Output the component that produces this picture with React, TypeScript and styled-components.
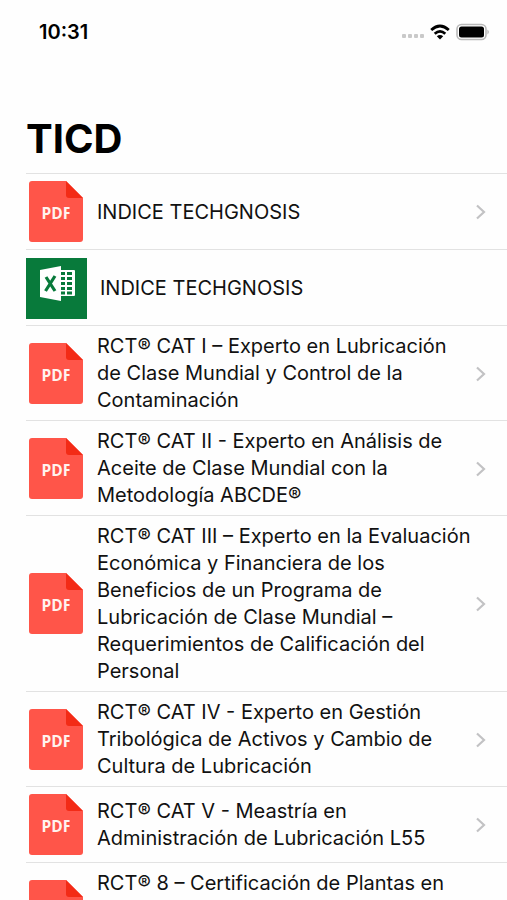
import React from 'react';
import styled, { createGlobalStyle } from 'styled-components';

const GlobalStyle = createGlobalStyle`
  * { box-sizing: border-box; }
  body {
    margin: 0;
    background: #fefefe;
    color: #111;
    font-family: Inter, "Liberation Sans", sans-serif;
  }
`;

const Screen = styled.div`
  height: 100vh;
  overflow: hidden;
  display: flex;
  flex-direction: column;
`;

const StatusBar = styled.header`
  flex: none;
  display: flex;
  align-items: center;
  justify-content: space-between;
  height: 64px;
  padding: 0 17px 0 39px;
`;

const Clock = styled.time`
  font-size: 20px;
  line-height: 24px;
  font-weight: 600;
  color: #000;
`;

const StatusIcons = styled.div`
  display: flex;
  align-items: center;
  gap: 6px;
`;

const Title = styled.h1`
  flex: none;
  margin: 0;
  padding: 50px 26px 10px;
  font-size: 40px;
  line-height: 49px;
  font-weight: 700;
  color: #000;
`;

const List = styled.ul`
  list-style: none;
  margin: 0 0 0 26px;
  padding: 0;
  border-top: 1px solid #e2e2e2;
`;

const Item = styled.li`
  border-bottom: 1px solid #e2e2e2;
`;

const RowLink = styled.a<{ $wide: boolean }>`
  display: flex;
  align-items: center;
  min-height: 75px;
  padding: 7px 20px 6px ${(p) => (p.$wide ? 0 : 3)}px;
  color: inherit;
  text-decoration: none;

  svg { flex: none; display: block; }
`;

const Label = styled.span<{ $lines: number }>`
  flex: 1;
  min-width: 0;
  min-height: ${(p) => p.$lines * 27}px;
  margin-left: 13px;
  font-size: 20px;
  line-height: 27px;
`;

function PdfIcon() {
  return (
    <svg width="55" height="62" viewBox="0 0 55 62" aria-hidden="true">
      <path d="M3 0H37L54 17V58Q54 61 51 61H3Q0 61 0 58V3Q0 0 3 0Z" fill="#ff5549" />
      <path d="M37 0L54 17H40Q37 17 37 14Z" fill="#f32b16" />
      <svg x="8" y="20" width="32.500" height="26" overflow="hidden">
        <text x="4.500" y="18" fontFamily="Open Sans, sans-serif" fontWeight="700" fontSize="15.500" fill="#fff3ee">PDF</text>
      </svg>
    </svg>
  );
}

function ExcelIcon() {
  return (
    <svg width="61" height="61" viewBox="0 0 61 61" aria-hidden="true">
      <rect width="61" height="61" fill="#087a3b" />
      <path d="M34 12H48Q49 12 49 13V37Q49 38 48 38H34Z" fill="#fff" />
      <path d="M35 15.5H39M41 15.5H46M35 20.5H39M41 20.5H46M35 25.5H39M41 25.5H46M35 30.5H39M41 30.5H46M35 35H39M41 35H46" stroke="#087a3b" strokeWidth="3" />
      <path d="M14 12L35 8V43L14 39Z" fill="#fff" />
      <path d="M20 19L29 33M29 18L19.500 33" stroke="#087a3b" strokeWidth="3.200" />
    </svg>
  );
}

function Chevron() {
  return (
    <svg width="12" height="18" viewBox="0 0 12 18" fill="none" aria-hidden="true">
      <path d="M2 2.500L9 9L2 15.500" stroke="#c2c2c4" strokeWidth="2.200" />
    </svg>
  );
}

function SignalIcon() {
  return (
    <svg width="22" height="20" viewBox="0 0 22 20" fill="#c9c9c9" aria-hidden="true">
      <rect x="0" y="12" width="4" height="4" rx="1" />
      <rect x="6" y="12" width="4" height="4" rx="1" />
      <rect x="12" y="12" width="4" height="4" rx="1" />
      <rect x="18" y="12" width="4" height="4" rx="1" />
    </svg>
  );
}

function WifiIcon() {
  return (
    <svg width="20" height="16" viewBox="0 0 20 16" fill="none" stroke="#000" strokeWidth="2.800" aria-hidden="true">
      <path d="M1.200 6Q10 -2 18.800 6" />
      <path d="M4.700 9.700Q10 5 15.300 9.700" />
      <path d="M10 15.500L6.800 12.300Q10 9.500 13.200 12.300Z" fill="#000" stroke="none" />
    </svg>
  );
}

function BatteryIcon() {
  return (
    <svg width="34" height="18" viewBox="0 0 34 18" aria-hidden="true">
      <rect x="1" y="1.500" width="29" height="15" rx="4.500" fill="#fff" stroke="#b9b9b9" strokeWidth="1.600" />
      <rect x="3" y="3.500" width="25" height="11" rx="2.500" fill="#000" />
      <path d="M31.500 6.500Q34 9 31.500 11.500Z" fill="#aaa" />
    </svg>
  );
}

interface Entry {
  kind: 'pdf' | 'excel';
  text: string;
  lines?: number;
}

const entries: Entry[] = [
  { kind: 'pdf', text: 'INDICE TECHGNOSIS' },
  { kind: 'excel', text: 'INDICE TECHGNOSIS' },
  { kind: 'pdf', text: 'RCT® CAT I – Experto en Lubricación de Clase Mundial y Control de la Contaminación' },
  { kind: 'pdf', text: 'RCT® CAT II - Experto en Análisis de Aceite de Clase Mundial con la Metodología ABCDE®' },
  {
    kind: 'pdf',
    text: 'RCT® CAT III – Experto en la Evaluación Económica y Financiera de los Beneficios de un Programa de Lubricación de Clase Mundial – Requerimientos de Calificación del Personal',
  },
  { kind: 'pdf', text: 'RCT® CAT IV - Experto en Gestión Tribológica de Activos y Cambio de Cultura de Lubricación' },
  { kind: 'pdf', text: 'RCT® CAT V - Meastría en Administración de Lubricación L55' },
  { kind: 'pdf', text: 'RCT® 8 – Certificación de Plantas en', lines: 3 },
];

export default function App() {
  return (
    <Screen>
      <GlobalStyle />
      <StatusBar>
        <Clock>10:31</Clock>
        <StatusIcons>
          <SignalIcon />
          <WifiIcon />
          <BatteryIcon />
        </StatusIcons>
      </StatusBar>
      <Title>TICD</Title>
      <List>
        {entries.map((entry, i) => (
          <Item key={i}>
            <RowLink href="#" $wide={entry.kind === 'excel'}>
              {entry.kind === 'pdf' ? <PdfIcon /> : <ExcelIcon />}
              <Label $lines={entry.lines ?? 1}>{entry.text}</Label>
              {entry.kind === 'pdf' && <Chevron />}
            </RowLink>
          </Item>
        ))}
      </List>
    </Screen>
  );
}
